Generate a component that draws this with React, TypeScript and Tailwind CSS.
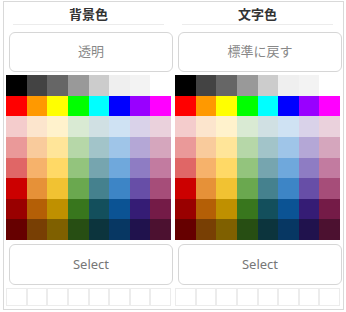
import React from "react";

const palette = [
  ["#000000", "#434343", "#666666", "#999999", "#cccccc", "#efefef", "#f3f3f3", "#ffffff"],
  ["#ff0000", "#ff9900", "#ffff00", "#00ff00", "#00ffff", "#0000ff", "#9900ff", "#ff00ff"],
  ["#f4cccc", "#fce5cd", "#fff2cc", "#d9ead3", "#d0e0e3", "#cfe2f3", "#d9d2e9", "#ead1dc"],
  ["#ea9999", "#f9cb9c", "#ffe599", "#b6d7a8", "#a2c4c9", "#9fc5e8", "#b4a7d6", "#d5a6bd"],
  ["#e06666", "#f6b26b", "#ffd966", "#93c47d", "#76a5af", "#6fa8dc", "#8e7cc3", "#c27ba0"],
  ["#cc0000", "#e69138", "#f1c232", "#6aa84f", "#45818e", "#3d85c6", "#674ea7", "#a64d79"],
  ["#990000", "#b45f06", "#bf9000", "#38761d", "#134f5c", "#0b5394", "#351c75", "#741b47"],
  ["#660000", "#783f04", "#7f6000", "#274e13", "#0c343d", "#073763", "#20124d", "#4c1130"],
];

const ColorColumn = ({ title, reset }: { title: string; reset: string }) => {
  return (
    <div className="flex flex-col w-[165px]">
      {/* heading */}
      <div className="h-[23px] mx-[7px] border-b border-[#ececec] flex items-end justify-center pb-[2px]">
        <span className="text-[13px] leading-[16px] font-bold text-[#333]">{title}</span>
      </div>
      <button className="mt-[7px] ml-[3px] w-[164px] h-[40px] rounded-[6px] border border-[#d6d6d6] bg-white text-[13px] text-[#888]">
        {reset}
      </button>

      {/* swatches */}
      <div className="mt-[3px] grid grid-cols-8">
        {palette.flat().map((c, i) => (
          <div key={i} className="h-[20.625px]" style={{ backgroundColor: c }} />
        ))}
      </div>

      <button className="mt-[4px] ml-[3px] w-[164px] h-[41px] rounded-[6px] border border-[#d6d6d6] bg-white text-[13px] text-[#777]">
        Select
      </button>

      {/* recent colours */}
      <div className="mt-[3px] grid grid-cols-8">
        {Array.from({ length: 8 }).map((_, i) => (
          <div key={i} className="h-[18px] border border-[#ececec]" />
        ))}
      </div>
    </div>
  );
};

export default function App() {
  return (
    <div
      className="w-[346px] h-[312px] bg-white pt-[1px] pl-[3px]"
      style={{ fontFamily: '"Noto Sans", "Noto Sans CJK JP", sans-serif' }}
    >
      <div className="w-[341px] h-[309px] border border-[#d9d9d9] flex gap-[4px] px-[2px]">
        <ColorColumn title="背景色" reset="透明" />
        <ColorColumn title="文字色" reset="標準に戻す" />
      </div>
    </div>
  );
}
